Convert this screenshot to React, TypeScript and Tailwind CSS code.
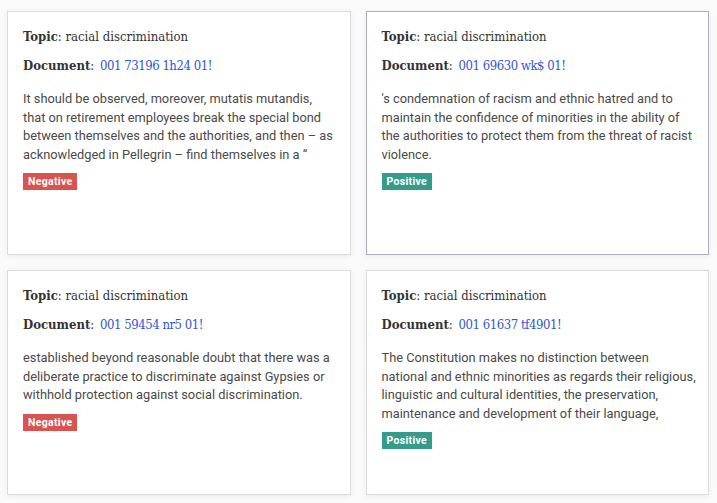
import React from "react";

type Item = {
  doc: string;
  lines: string[];
  label: "Positive" | "Negative";
  active?: boolean;
};

const items: Item[] = [
  {
    doc: "001 73196 1h24 01!",
    lines: [
      "It should be observed, moreover, mutatis mutandis,",
      "that on retirement employees break the special bond",
      "between themselves and the authorities, and then – as",
      "acknowledged in Pellegrin – find themselves in a “",
    ],
    label: "Negative",
  },
  {
    doc: "001 69630 wk$ 01!",
    lines: [
      "'s condemnation of racism and ethnic hatred and to",
      "maintain the confidence of minorities in the ability of",
      "the authorities to protect them from the threat of racist",
      "violence.",
    ],
    label: "Positive",
    active: true,
  },
  {
    doc: "001 59454 nr5 01!",
    lines: [
      "established beyond reasonable doubt that there was a",
      "deliberate practice to discriminate against Gypsies or",
      "withhold protection against social discrimination.",
    ],
    label: "Negative",
  },
  {
    doc: "001 61637 tf4901!",
    lines: [
      "The Constitution makes no distinction between",
      "national and ethnic minorities as regards their religious,",
      "linguistic and cultural identities, the preservation,",
      "maintenance and development of their language,",
    ],
    label: "Positive",
  },
];

const Card = ({ item, tall }: { item: Item; tall: boolean }) => (
  <div
    className={`bg-white border px-[15px] pt-[16px] shadow-[0_1px_6px_rgba(0,0,0,0.06)] ${
      item.active ? "border-[#aeadc4]" : "border-[#dcdcdc]"
    } ${tall ? "h-[244px]" : "h-[225px]"}`}
  >
    <p className="font-['DejaVu_Serif_Condensed','DejaVu_Serif',serif] text-[13px] leading-[18px] text-[#333]">
      <b className="font-bold">Topic</b>: racial discrimination
    </p>
    <p className="mt-[11px] font-['DejaVu_Serif_Condensed','DejaVu_Serif',serif] text-[13px] leading-[18px] text-[#333]">
      <b className="font-bold">Document</b>:{" "}
      <span className="ml-[2px] tracking-[-0.035em] text-[#2f55d4]">{item.doc}</span>
    </p>
    <p className="mt-[15px] font-['Roboto',sans-serif] text-[12.8px] leading-[18.5px] text-[#4a4a4a]">
      {item.lines.map((l, i) => (
        <span key={i} className="block whitespace-nowrap">
          {l}
        </span>
      ))}
    </p>
    <span
      className={`mt-[9px] inline-block px-[5px] h-[17px] leading-[17px] text-[10.5px] font-bold tracking-[0.03em] text-white font-['Roboto',sans-serif] ${
        item.label === "Negative" ? "bg-[#d9534f]" : "bg-[#359b8b]"
      }`}
    >
      {item.label}
    </span>
  </div>
);

export default function App() {
  return (
    <div className="min-h-[503px] bg-[#fafafa] pl-[7px] pr-[8px] pt-[11px]">
      <div className="grid grid-cols-2 gap-[15px]">
        {items.map((it, i) => (
          <Card key={i} item={it} tall={i < 2} />
        ))}
      </div>
    </div>
  );
}
